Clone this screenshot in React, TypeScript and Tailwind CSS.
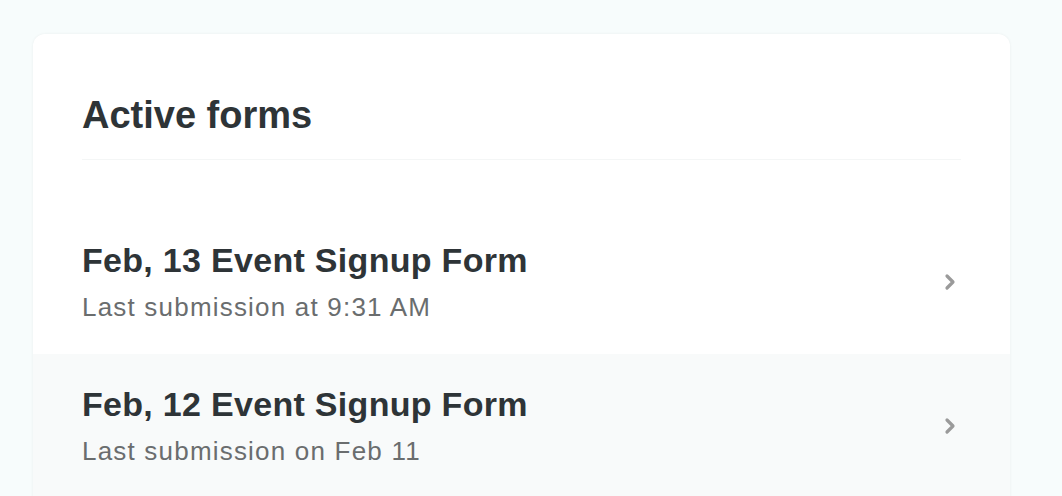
import { ChevronRight } from 'lucide-react';

const FORMS = [
  { title: 'Feb, 13 Event Signup Form', sub: 'Last submission at 9:31 AM', highlight: false },
  { title: 'Feb, 12 Event Signup Form', sub: 'Last submission on Feb 11', highlight: true },
];

export default function App() {
  return (
    <div className="h-[496px] overflow-hidden bg-[#f7fcfc] pt-[34px] pl-[33px] pr-[52px] font-['Liberation_Sans',Arial,sans-serif]">
      <div className="rounded-[12px] bg-white shadow-[0_0_3px_rgba(0,0,0,0.06)] overflow-hidden pb-[40px]">
        {/* Header */}
        <div className="mx-[49px] pt-[59px] pb-[20px] border-b border-[#f4f6f6]">
          <h1 className="text-[38px] leading-[1.2] font-bold text-[#2e3437]">Active forms</h1>
        </div>

        <div className="pt-[50px]">
          {FORMS.map(f => (
            <div
              key={f.title}
              className={`h-[144px] flex items-center justify-between pl-[49px] pr-[48px] ${f.highlight ? 'bg-[#f8fafa]' : 'bg-white'}`}
            >
              <div>
                <p className="text-[34px] leading-[1.2] font-bold tracking-[0.3px] text-[#2e3437]">{f.title}</p>
                <p className="mt-[12px] text-[26px] leading-[1.2] tracking-[1.2px] text-[#6a6d6e]">{f.sub}</p>
              </div>
              <ChevronRight size={24} strokeWidth={3.2} className="text-[#9a9a9a]" />
            </div>
          ))}
        </div>
      </div>
    </div>
  );
}
